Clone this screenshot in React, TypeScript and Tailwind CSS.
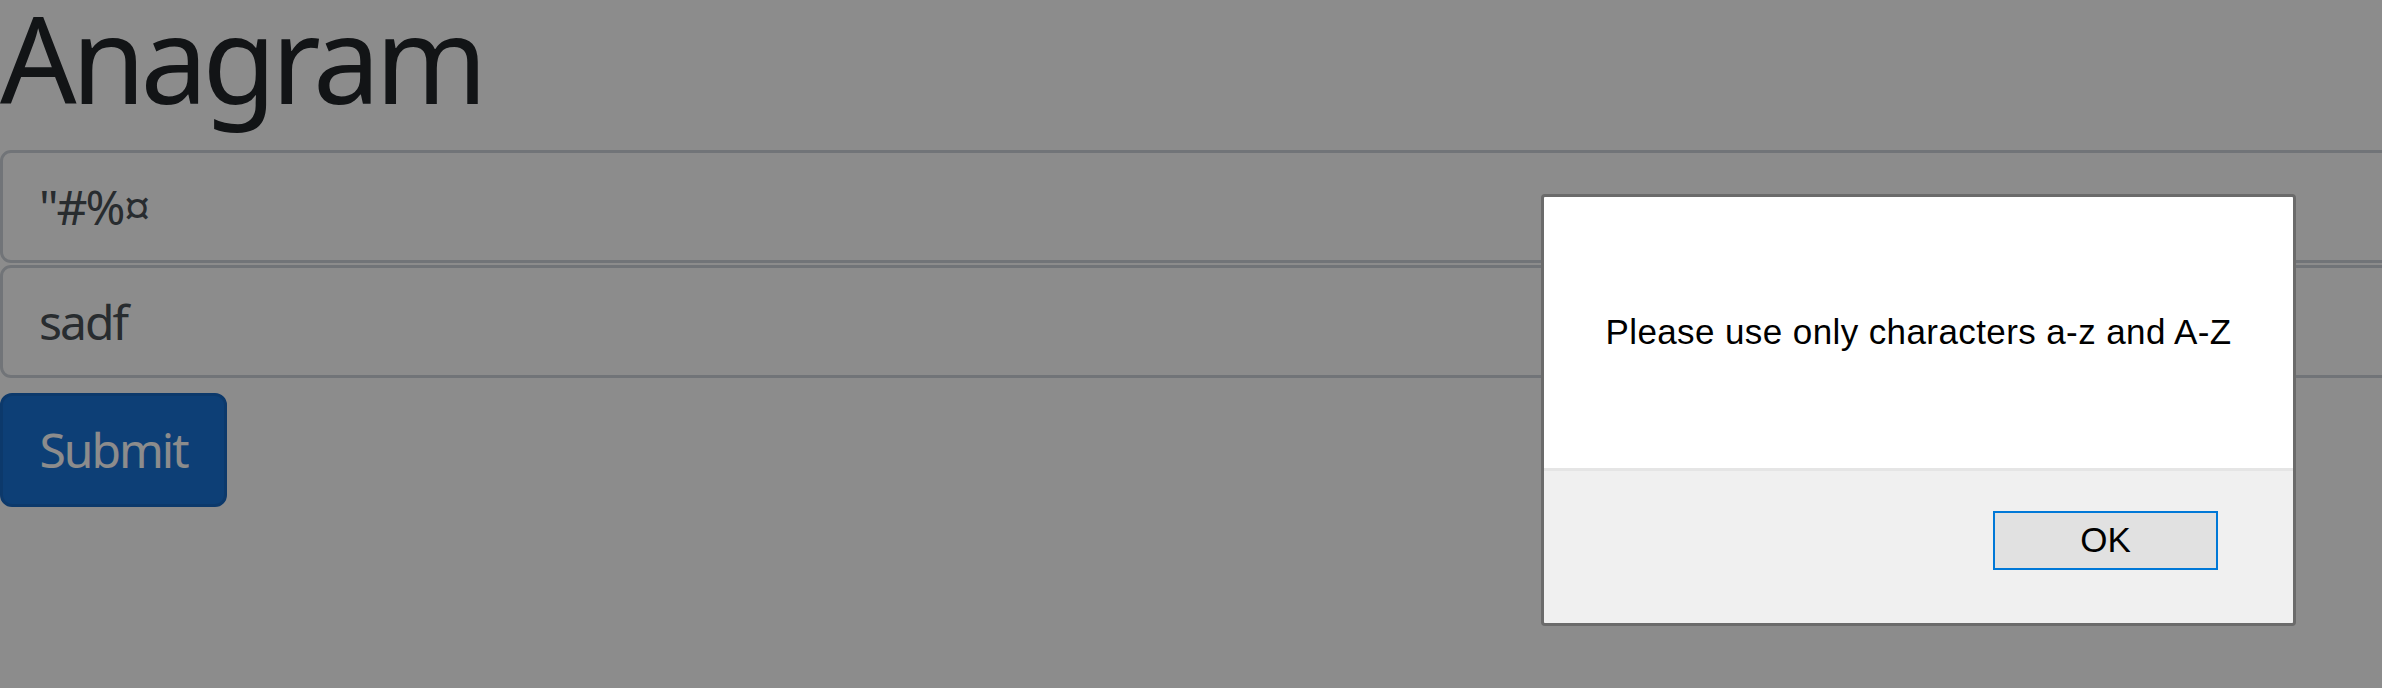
export default function App() {
  const sans = { fontFamily: '"Noto Sans", "Open Sans", sans-serif' };

  return (
    <div className="relative h-screen w-full overflow-hidden bg-white" style={sans}>
      <div className="flex flex-col items-start">
        <h1 className="mb-[35px] h-[115px] text-[120px] leading-[115px] font-normal tracking-[-5.2px] text-[#212529]">
          Anagram
        </h1>
        <input
          type="text"
          defaultValue={'"#%¤'}
          readOnly
          className="h-[113px] w-[2440px] rounded-[11px] border-[3px] border-[#ced4da] bg-white px-[36px] text-[48px] tracking-[-2px] text-[#495057] outline-none"
        />
        <input
          type="text"
          defaultValue="sadf"
          readOnly
          className="mt-[2px] h-[113px] w-[2440px] rounded-[11px] border-[3px] border-[#ced4da] bg-white px-[36px] text-[48px] tracking-[-2px] text-[#495057] outline-none"
        />
        <button
          type="button"
          className="mt-[15px] h-[114px] w-[227px] rounded-[12px] border-[3px] border-[#1768c4] bg-[#1873d8] text-center text-[48px] leading-[72px] tracking-[-2px] text-white"
        >
          Submit
        </button>
      </div>

      {/* dimmed backdrop behind the alert */}
      <div className="absolute inset-0 bg-black/45" />

      <div
        className="absolute left-[1541px] top-[194px] flex h-[432px] w-[755px] flex-col overflow-hidden rounded-[4px] border-[3px] border-[#6b6b6b]"
        style={{ fontFamily: '"Liberation Sans", Arial, sans-serif' }}
      >
        <div className="flex h-[271px] items-center justify-center bg-white">
          <p className="text-[35px] tracking-[0.4px] text-black">
            Please use only characters a-z and A-Z
          </p>
        </div>
        <div className="h-[3px] bg-[#e5e5e5]" />
        <div className="flex flex-1 items-start justify-end bg-[#f0f0f0] pt-[40px] pr-[75px]">
          <button
            type="button"
            className="flex h-[59px] w-[225px] items-center justify-center border-2 border-[#0078d7] bg-[#e1e1e1] text-[35px] text-black"
          >
            OK
          </button>
        </div>
      </div>
    </div>
  );
}
